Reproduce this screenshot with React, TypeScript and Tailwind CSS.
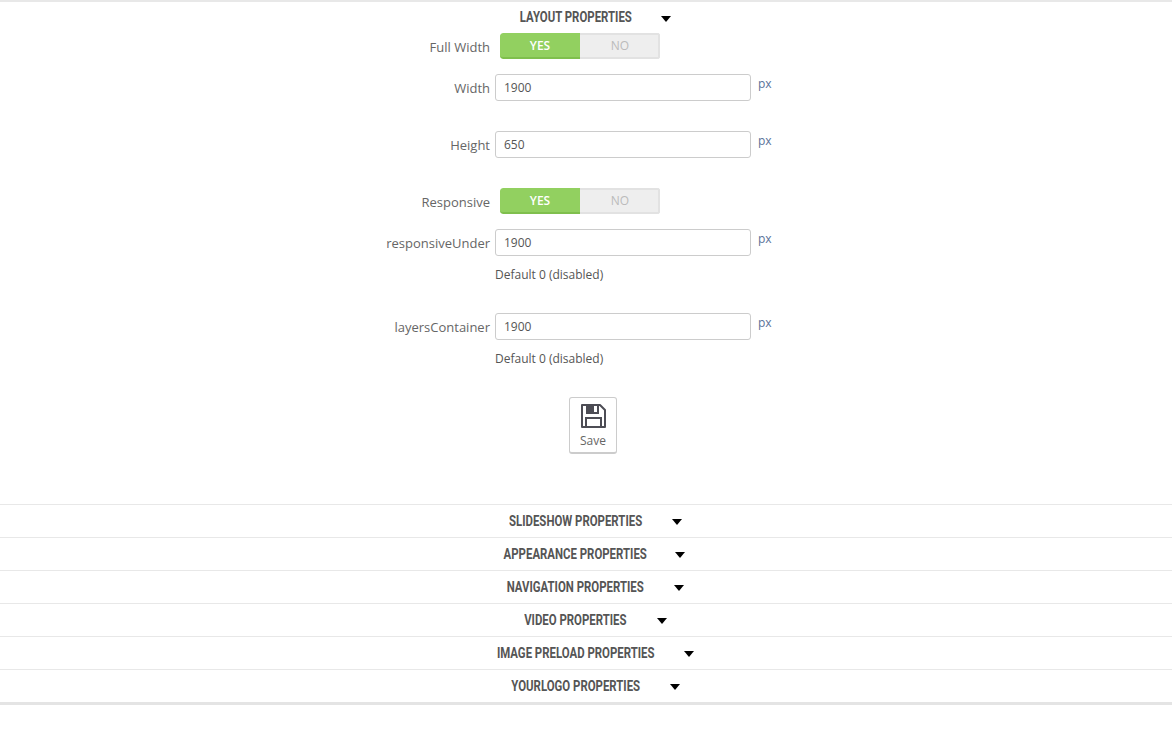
const bodyFont = "font-['Open_Sans',sans-serif]";

function Caret() {
  return <span className="ml-[28px] mt-[2px] h-0 w-0 border-x-[5.5px] border-t-[6px] border-x-transparent border-t-black" />;
}

function Section({ title, width, first }: { title: string; width: number; first?: boolean }) {
  return (
    <div className={`flex h-[33px] items-center justify-center border-t border-[#e8e8e8] pl-[19px] ${first ? "border-t-2 border-[#e6e6e6]" : ""}`}>
      <span style={{ width }} className="flex justify-center pr-[2px]">
        <span className="whitespace-nowrap font-['Roboto',sans-serif] text-[15px] font-bold text-[#555] [transform:scaleX(0.76)]">{title}</span>
      </span>
      <Caret />
    </div>
  );
}

function Toggle({ label, className }: { label: string; className: string }) {
  return (
    <div className={`flex items-start ${className}`}>
      <div className="w-[490px] pt-[5px] text-right text-[13px] leading-[18px] text-[#666]">{label}</div>
      <div className="ml-[10px] flex h-[26px] w-[160px] overflow-hidden rounded-[3px] text-[12px] leading-[25px]">
        <div className="w-[80px] rounded-l-[3px] border-b-2 border-[#7fbf4d] bg-[#92d060] text-center font-semibold text-white">YES</div>
        <div className="w-[80px] border-b-2 border-r-2 border-t-2 border-[#e2e2e2] bg-[#eeeeee] pl-[2px] text-center leading-[22px] text-[#bbb]">NO</div>
      </div>
    </div>
  );
}

function Field({ label, value, help, className }: { label: string; value: string; help?: boolean; className: string }) {
  return (
    <div className={className}>
      <div className="flex items-start">
        <div className="w-[490px] pt-[5px] text-right text-[13px] leading-[18px] text-[#666]">{label}</div>
        <div className="ml-[5px] flex h-[27px] w-[256px] items-center rounded-[3px] border border-[#ccc] bg-white pl-[8px] text-[12px] text-[#555]">{value}</div>
        <div className="ml-[7px] pt-[1px] text-[12px] leading-[18px] text-[#5a7299]">px</div>
      </div>
      {help && <div className="ml-[495px] mt-[10px] h-[17px] text-[12px] leading-[18px] text-[#555]">Default 0 (disabled)</div>}
    </div>
  );
}

export default function App() {
  return (
    <div className={`h-[739px] w-[1172px] overflow-hidden bg-white ${bodyFont}`}>
      <Section title="LAYOUT PROPERTIES" width={112} first />
      <Toggle label="Full Width" className="" />
      <Field label="Width" value="1900" className="mt-[15px]" />
      <Field label="Height" value="650" className="mt-[30px]" />
      <Toggle label="Responsive" className="mt-[30px]" />
      <Field label="responsiveUnder" value="1900" help className="mt-[15px]" />
      <Field label="layersContainer" value="1900" help className="mt-[30px]" />
      <div className="mt-[30px] flex justify-center pl-[14px]">
        <div className="flex h-[57px] w-[48px] flex-col items-center rounded-[3px] border border-b-2 border-[#ccc] bg-white pt-[5px]">
          <svg width="26" height="26" viewBox="0 0 26 26" fill="none" stroke="#4d4d55" strokeWidth="2">
            <path d="M2 2H20L25 7V24H2Z" strokeLinejoin="round" />
            <path d="M7 2V10H18V2" />
            <path d="M6 24V15H21V24" />
            <rect x="8" y="2.5" width="6" height="7" fill="#4d4d55" stroke="none" />
          </svg>
          <span className="mt-[4px] text-[12px] leading-[15px] text-[#666]">Save</span>
        </div>
      </div>
      <div className="mt-[50px]">
        <Section title="SLIDESHOW PROPERTIES" width={134} />
        <Section title="APPEARANCE PROPERTIES" width={141} />
        <Section title="NAVIGATION PROPERTIES" width={138} />
        <Section title="VIDEO PROPERTIES" width={104} />
        <Section title="IMAGE PRELOAD PROPERTIES" width={159} />
        <Section title="YOURLOGO PROPERTIES" width={131} />
        <div className="h-[3px] bg-[#e4e4e4]" />
      </div>
    </div>
  );
}
